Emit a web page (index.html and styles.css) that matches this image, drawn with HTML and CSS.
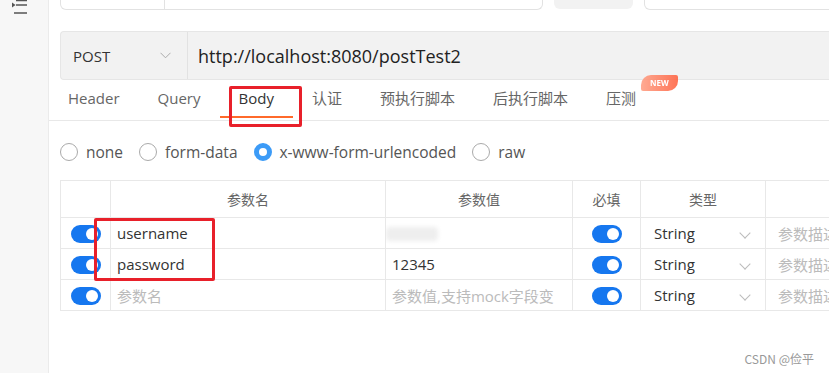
FILE: index.html
```html
<!DOCTYPE html>
<html>

<head>
	<link rel="stylesheet" href="styles.css">
</head>

<body>
	<div class="app">
		<aside class="sidebar">
			<svg class="menu-icon" width="16" height="16" viewBox="0 0 16 16">
				<path d="M4 1.5h11M4 6h11M2 14h13" stroke="#555" stroke-width="1.5" fill="none"/>
				<path d="M0 3.5l3.5 2.5-3.5 2.5z" fill="#555"/>
			</svg>
		</aside>
		<main class="main">
			<div class="top-row">
				<div class="top-box"><div class="top-cell"></div></div>
				<div class="top-btn"></div>
				<div class="top-box2"></div>
			</div>

			<div class="url-bar">
				<div class="method">
					<span>POST</span>
					<svg width="11" height="7" viewBox="0 0 11 7"><path d="M0.5 0.8l5 5 5-5" stroke="#aaa" stroke-width="1" fill="none"/></svg>
				</div>
				<div class="url">http://localhost:8080/postTest2</div>
			</div>

			<div class="tabs">
				<span class="tab">Header</span>
				<span class="tab">Query</span>
				<span class="tab active">Body</span>
				<span class="tab">认证</span>
				<span class="tab">预执行脚本</span>
				<span class="tab">后执行脚本</span>
				<span class="tab">压测<span class="badge">NEW</span></span>
			</div>

			<div class="radios">
				<label class="radio"><span class="dot"></span>none</label>
				<label class="radio"><span class="dot"></span>form-data</label>
				<label class="radio"><span class="dot checked"></span>x-www-form-urlencoded</label>
				<label class="radio"><span class="dot"></span>raw</label>
			</div>

			<table class="params">
				<colgroup>
					<col style="width:50px"><col style="width:275px"><col style="width:187px">
					<col style="width:68px"><col style="width:125px"><col style="width:160px">
				</colgroup>
				<tr class="head">
					<th></th><th>参数名</th><th>参数值</th><th>必填</th><th>类型</th><th></th>
				</tr>
				<tr>
					<td class="center"><span class="switch"></span></td>
					<td>username</td>
					<td class="value"><span class="blur"></span></td>
					<td class="center"><span class="switch"></span></td>
					<td class="type">String<span class="chev"></span></td>
					<td class="desc">参数描述</td>
				</tr>
				<tr>
					<td class="center"><span class="switch"></span></td>
					<td>password</td>
					<td class="value">12345</td>
					<td class="center"><span class="switch"></span></td>
					<td class="type">String<span class="chev"></span></td>
					<td class="desc">参数描述</td>
				</tr>
				<tr>
					<td class="center"><span class="switch"></span></td>
					<td class="hint">参数名</td>
					<td class="value hint">参数值,支持mock字段变</td>
					<td class="center"><span class="switch"></span></td>
					<td class="type">String<span class="chev"></span></td>
					<td class="desc">参数描述</td>
				</tr>
			</table>

			<div class="mark mark-body"></div>
			<div class="mark mark-names"></div>
			<div class="watermark">CSDN @俭平</div>
		</main>
	</div>
</body>

</html>
```

FILE: styles.css
```css
body {
	font-family: 'Open Sans', 'Noto Sans CJK SC', sans-serif;
	background-color: white;
	color: #333;
	margin: 0;
	width: 829px;
	height: 373px;
	overflow: hidden;
}

.app {
	display: flex;
	height: 373px;
}

.sidebar {
	width: 48px;
	flex-shrink: 0;
	background-color: #f7f7f7;
	border-right: 1px solid #ebebeb;
}

.menu-icon {
	display: block;
	margin: -1px 0 0 12px;
}

.main {
	flex: 1;
	position: relative;
	overflow: hidden;
}

/* top row, cut off by the window */
.top-row {
	display: flex;
	height: 10px;
	padding-left: 11px;
}

.top-box {
	flex-shrink: 0;
	width: 483px;
	border: 1px solid #e2e2e2;
	border-top: none;
	border-radius: 0 0 6px 6px;
	box-sizing: border-box;
}

.top-cell {
	width: 103px;
	height: 100%;
	border-right: 1px solid #e2e2e2;
}

.top-btn {
	flex-shrink: 0;
	width: 79px;
	height: 9px;
	margin-left: 11px;
	background-color: #f2f2f2;
	border-radius: 0 0 6px 6px;
}

.top-box2 {
	flex-shrink: 0;
	width: 240px;
	margin-left: 11px;
	border: 1px solid #e2e2e2;
	border-top: none;
	border-radius: 0 0 0 6px;
	box-sizing: border-box;
}

.url-bar {
	display: flex;
	align-items: center;
	height: 49px;
	margin: 21px 0 0 11px;
	box-sizing: border-box;
	background-color: #f2f2f2;
	border: 1px solid #e6e6e6;
	border-right: none;
	border-radius: 4px 0 0 4px;
}

.method {
	width: 127px;
	height: 100%;
	box-sizing: border-box;
	display: flex;
	align-items: center;
	justify-content: space-between;
	padding: 0 16px 0 12px;
	border-right: 1px solid #e2e2e2;
	font-size: 15px;
	color: #333;
}

.url {
	padding-left: 10px;
	font-size: 18px;
	color: #222;
}

.tabs {
	display: flex;
	height: 40px;
	border-bottom: 1px solid #e8e8e8;
}

.tab {
	position: relative;
	padding: 0 19px 3px;
	line-height: 37px;
	font-size: 15px;
	color: #666;
}

.tab.active {
	color: #333;
}

.tab.active::after {
	content: "";
	position: absolute;
	left: 0;
	right: 0;
	bottom: 2px;
	height: 2px;
	background-color: #ff6a2b;
}

.badge {
	position: absolute;
	left: 54px;
	top: -5px;
	width: 37px;
	height: 16px;
	line-height: 16px;
	text-align: center;
	font-size: 8px;
	font-weight: bold;
	color: white;
	background: linear-gradient(90deg, #ff9c80, #ff5d3a);
	border-radius: 10px 2px 10px 2px;
	opacity: 0.85;
}

.radios {
	display: flex;
	align-items: center;
	height: 56px;
	padding: 3px 0 0 11px;
}

.radio {
	display: flex;
	align-items: center;
	margin-right: 16px;
	font-size: 15.5px;
	color: #555;
}

.dot {
	width: 18px;
	height: 18px;
	box-sizing: border-box;
	border: 1px solid #aaa;
	border-radius: 50%;
	margin-right: 8px;
	background-color: white;
}

.dot.checked {
	border: 5px solid #3c9bf7;
}

.params {
	margin-left: 11px;
	width: 865px;
	table-layout: fixed;
	border-collapse: collapse;
	font-size: 15px;
}

.params th,
.params td {
	border: 1px solid #e8e8e8;
	height: 30px;
	padding: 0 6px;
	white-space: nowrap;
	overflow: hidden;
}

.params th {
	height: 36px;
	font-weight: normal;
	font-size: 14px;
	color: #666;
}

.params td.center {
	text-align: center;
	padding: 0;
}

.switch {
	display: inline-block;
	position: relative;
	vertical-align: middle;
	width: 30px;
	height: 18px;
	border-radius: 9px;
	background-color: #1677ef;
}

.switch::after {
	content: "";
	position: absolute;
	right: 3px;
	top: 3px;
	width: 12px;
	height: 12px;
	border-radius: 50%;
	background-color: white;
}

.hint,
.params td.desc {
	color: #bbb;
}

.params td.value {
	padding-left: 6px;
}

.blur {
	display: block;
	width: 52px;
	height: 14px;
	margin: 2px 0 0 -6px;
	background-color: #eeeeee;
	border-radius: 4px;
	filter: blur(2px);
}

.params td.type {
	position: relative;
	padding-left: 13px;
}

.chev {
	position: absolute;
	right: 16px;
	top: 11px;
	width: 7px;
	height: 7px;
	border-right: 1px solid #bbb;
	border-bottom: 1px solid #bbb;
	transform: rotate(45deg);
}

.params td.desc {
	padding-left: 12px;
}

/* red annotation boxes drawn over the shot */
.mark {
	position: absolute;
	border: 3px solid #e8202a;
	border-radius: 2px;
}

.mark-body {
	left: 180px;
	top: 86px;
	width: 67px;
	height: 35px;
}

.mark-names {
	left: 45px;
	top: 218px;
	width: 115px;
	height: 57px;
}

.watermark {
	position: absolute;
	right: 15px;
	top: 350px;
	font-family: 'Noto Sans CJK SC', sans-serif;
	font-size: 12px;
	color: #999;
}
```
